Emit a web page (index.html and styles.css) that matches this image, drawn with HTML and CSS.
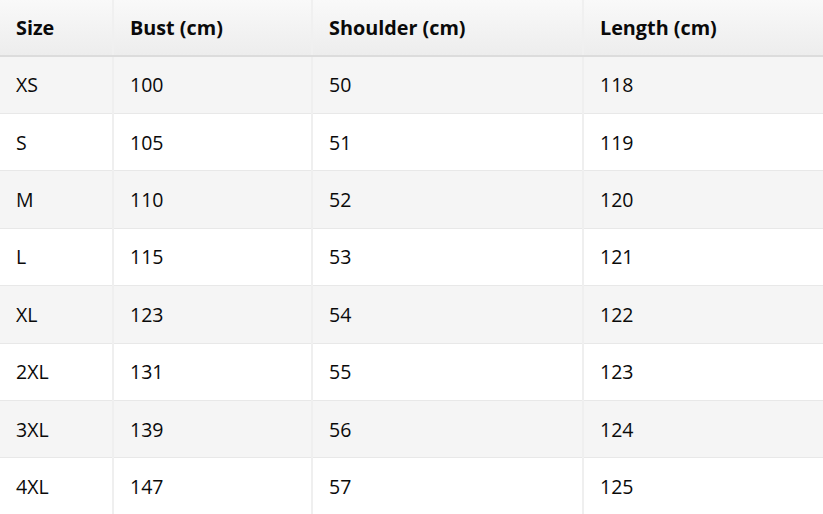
FILE: index.html
```html
<!DOCTYPE html>
<html>
<head>
<meta charset="utf-8">
<link rel="stylesheet" href="styles.css">
</head>
<body>
<table class="size-table">
  <colgroup>
    <col class="c1"><col class="c2"><col class="c3"><col class="c4">
  </colgroup>
  <thead>
    <tr><th>Size</th><th>Bust (cm)</th><th>Shoulder (cm)</th><th>Length (cm)</th></tr>
  </thead>
  <tbody>
    <tr><td>XS</td><td>100</td><td>50</td><td>118</td></tr>
    <tr><td>S</td><td>105</td><td>51</td><td>119</td></tr>
    <tr><td>M</td><td>110</td><td>52</td><td>120</td></tr>
    <tr><td>L</td><td>115</td><td>53</td><td>121</td></tr>
    <tr><td>XL</td><td>123</td><td>54</td><td>122</td></tr>
    <tr><td>2XL</td><td>131</td><td>55</td><td>123</td></tr>
    <tr><td>3XL</td><td>139</td><td>56</td><td>124</td></tr>
    <tr><td>4XL</td><td>147</td><td>57</td><td>125</td></tr>
  </tbody>
</table>
</body>
</html>
```

FILE: styles.css
```css
html, body {
  margin: 0;
  padding: 0;
  background: #ffffff;
  overflow: hidden;
}
.size-table {
  border-collapse: collapse;
  table-layout: fixed;
  width: 824px;
  font-family: "Open Sans", "Noto Sans", sans-serif;
  font-size: 19.5px;
  color: #0a0a0a;
}
.c1 { width: 113px; }
.c2 { width: 199px; }
.c3 { width: 271px; }
.c4 { width: 241px; }
.size-table th {
  height: 54.6px;
  padding: 0 16px;
  text-align: left;
  font-weight: 700;
  font-size: 19.8px;
  background: linear-gradient(#f9f9f9, #ededed);
  border-bottom: 2px solid #dcdcdc;
  border-right: 2px solid #f0f0f0;
}
.size-table td {
  height: 56.4px;
  padding: 0 16px;
  border-bottom: 1px solid #e8e8e8;
  border-right: 2px solid #efefef;
}
.size-table th:last-child, .size-table td:last-child { border-right: 1px solid #efefef; }
.size-table tbody tr:nth-child(odd) td { background: #f5f5f5; }
```
